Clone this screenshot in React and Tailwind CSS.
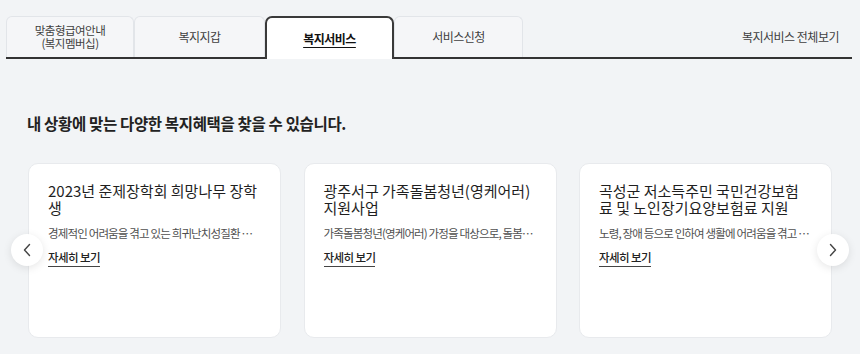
const cards = [
  {
    title: "2023년 준제장학회 희망나무 장학생",
    desc: "경제적인 어려움을 겪고 있는 희귀난치성질환 청소년을 대상으로 장학금을 지원합니다.",
  },
  {
    title: "광주서구 가족돌봄청년(영케어러) 지원사업",
    desc: "가족돌봄청년(영케어러) 가정을 대상으로, 돌봄지원 서비스를 제공합니다.",
  },
  {
    title: "곡성군 저소득주민 국민건강보험료 및 노인장기요양보험료 지원",
    desc: "노령, 장애 등으로 인하여 생활에 어려움을 겪고 있는 저소득 주민을 지원합니다.",
  },
];

function Chevron({ dir }) {
  return (
    <svg width="10" height="14" viewBox="0 0 10 14" fill="none">
      <path
        d={dir === "left" ? "M7.5 1.5 L2.5 7 L7.5 12.5" : "M2.5 1.5 L7.5 7 L2.5 12.5"}
        stroke="#444"
        strokeWidth="1.4"
        strokeLinecap="round"
        strokeLinejoin="round"
      />
    </svg>
  );
}

export default function App() {
  return (
    <div className="min-h-screen bg-[#f2f4f6] font-['Noto_Sans_CJK_KR',sans-serif] text-[#222]">
      <div className="pt-4 pl-[6px] pr-[8px]">
        <div className="flex items-end border-b-2 border-[#333] h-[43px] text-[12px] tracking-[-0.5px] text-[#3f3f3f]">
          <div className="w-[128px] h-[41px] flex flex-col items-center justify-center leading-[13px] text-[11.5px] bg-[#f5f6f8] border border-b-0 border-[#e2e5e9] rounded-t-[6px]">
            <span>맞춤형급여안내</span>
            <span>(복지멤버십)</span>
          </div>
          <div className="w-[131px] h-[41px] flex items-center justify-center bg-[#f5f6f8] border border-b-0 border-[#e2e5e9] rounded-t-[6px]">
            복지지갑
          </div>
          <div className="w-[129px] h-[43px] -mb-[2px] flex items-center justify-center bg-white border-2 border-b-0 border-[#3a3a3a] rounded-t-[7px] font-bold text-[#111] underline underline-offset-[3px]">
            복지서비스
          </div>
          <div className="w-[129px] h-[41px] flex items-center justify-center bg-[#f5f6f8] border border-b-0 border-[#e2e5e9] rounded-t-[6px]">
            서비스신청
          </div>
          <div className="ml-auto h-[41px] flex items-center pr-[13px]">복지서비스 전체보기</div>
        </div>
      </div>

      <h2 className="mt-[54px] px-[27px] text-[15.5px] leading-[20px] font-bold tracking-[-0.35px] text-[#222]">
        내 상황에 맞는 다양한 복지혜택을 찾을 수 있습니다.
      </h2>

      <div className="relative mt-[30px] pl-[28px] flex gap-[22.5px]">
        {cards.map((c, i) => (
          <div
            key={i}
            className="w-[253px] h-[175px] shrink-0 bg-white rounded-[10px] border border-[#e8eaed] px-[19px] pt-[18px]"
          >
            <div className="text-[15px] leading-[17px] tracking-[0px] text-[#1f1f1f]">{c.title}</div>
            <div className="mt-[9px] text-[11.5px] leading-[16px] tracking-[-0.85px] text-[#4f4f4f] truncate">{c.desc}</div>
            <div className="mt-[8px] inline-block text-[11.5px] leading-[16px] tracking-[-0.6px] font-medium text-[#222] border-b border-[#444] pb-[1px]">
              자세히 보기
            </div>
          </div>
        ))}
        <button className="absolute left-[11px] top-[71px] w-8 h-8 rounded-full bg-white shadow-[0_2px_8px_rgba(0,0,0,0.1)] flex items-center justify-center">
          <Chevron dir="left" />
        </button>
        <button className="absolute left-[817px] top-[71px] w-8 h-8 rounded-full bg-white shadow-[0_2px_8px_rgba(0,0,0,0.1)] flex items-center justify-center">
          <Chevron dir="right" />
        </button>
      </div>
    </div>
  );
}
